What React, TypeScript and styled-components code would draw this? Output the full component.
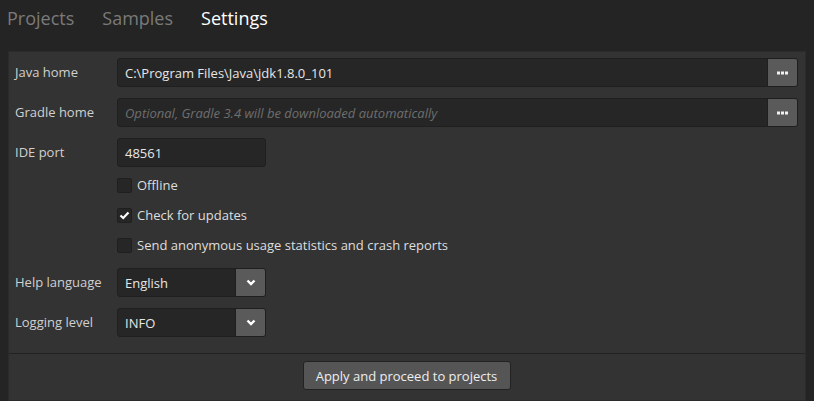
import * as React from "react";
import styled, { createGlobalStyle } from "styled-components";

const GlobalStyle = createGlobalStyle`
  html, body {
    margin: 0;
    padding: 0;
    background: #242424;
    font-family: "Open Sans", "Noto Sans", sans-serif;
  }
`;

const Page = styled.div`
  display: flex;
  flex-direction: column;
  width: 814px;
  height: 401px;
  overflow: hidden;
  background: #242424;
`;

const Tabs = styled.div`
  display: flex;
  gap: 28px;
  height: 36px;
  padding: 0 0 0 7px;
  align-items: center;
`;

const Tab = styled.div<{ $active?: boolean }>`
  font-size: 18px;
  color: ${(p) => (p.$active ? "#ffffff" : "#7a7a7a")};
`;

const Panel = styled.div`
  margin: 15px 0 0 8px;
  width: 798px;
  background: #333333;
  border: 1px solid #2b2b2b;
  box-sizing: border-box;
  flex: 1;
  display: flex;
  flex-direction: column;
`;

const Form = styled.div`
  display: flex;
  flex-direction: column;
  padding: 6px 7px 16px 6px;
  border-bottom: 1px solid #222222;
`;

const Row = styled.div<{ $gap?: number }>`
  display: flex;
  align-items: center;
  height: 29px;
  margin-top: ${(p) => p.$gap ?? 0}px;
`;

const Label = styled.div`
  width: 102px;
  flex: none;
  font-size: 13px;
  color: #d0d0d0;
  padding-bottom: 2px;
`;

const InputGroup = styled.div<{ $width?: number }>`
  display: flex;
  height: 29px;
  box-sizing: border-box;
  ${(p) => (p.$width ? `width: ${p.$width}px;` : "flex: 1;")}
  border: 1px solid #1f1f1f;
  border-radius: 3px;
  background: #262626;
  overflow: hidden;
`;

const Field = styled.div<{ $placeholder?: boolean }>`
  flex: 1;
  display: flex;
  align-items: center;
  padding: 0 7px;
  font-size: 13px;
  color: ${(p) => (p.$placeholder ? "#6e6e6e" : "#e6e6e6")};
  font-style: ${(p) => (p.$placeholder ? "italic" : "normal")};
`;

const SideButton = styled.div`
  width: 29px;
  flex: none;
  display: flex;
  align-items: center;
  justify-content: center;
  background: #5a5a5a;
  border-left: 1px solid #1f1f1f;
`;

const Checks = styled.div`
  display: flex;
  flex-direction: column;
  padding: 3px 0 0 102px;
`;

const CheckRow = styled.div`
  display: flex;
  align-items: center;
  height: 30px;
`;

const Box = styled.div`
  width: 15px;
  height: 15px;
  box-sizing: border-box;
  border: 1px solid #1f1f1f;
  border-radius: 2px;
  background: #262626;
  display: flex;
  align-items: center;
  justify-content: center;
  margin-right: 5px;
`;

const CheckText = styled.div`
  font-size: 13px;
  color: #dedede;
  padding-bottom: 1px;
`;

const Footer = styled.div`
  display: flex;
  justify-content: center;
  padding: 7px 0;
`;

const Button = styled.div`
  width: 208px;
  height: 29px;
  box-sizing: border-box;
  display: flex;
  align-items: center;
  justify-content: center;
  background: #555555;
  border: 1px solid #222222;
  border-radius: 3px;
  font-size: 13px;
  color: #eeeeee;
  margin-left: -1px;
`;

const Dots = () => (
  <svg width="11" height="4" viewBox="0 0 11 4">
    <rect x="0" y="0.5" width="3" height="3" fill="#f2f2f2" />
    <rect x="4" y="0.5" width="3" height="3" fill="#f2f2f2" />
    <rect x="8" y="0.5" width="3" height="3" fill="#f2f2f2" />
  </svg>
);

const Chevron = () => (
  <svg width="10" height="7" viewBox="0 0 10 7">
    <path d="M1.5 1.5 L5 5 L8.5 1.5" stroke="#ffffff" strokeWidth="2.4" fill="none" />
  </svg>
);

const Tick = () => (
  <svg width="11" height="9" viewBox="0 0 11 9">
    <path d="M1.5 4.5 L4.2 7 L9.5 1.5" stroke="#ffffff" strokeWidth="2.2" fill="none" />
  </svg>
);

const Check: React.FC<{ checked?: boolean; label: string }> = ({ checked, label }) => (
  <CheckRow>
    <Box>{checked && <Tick />}</Box>
    <CheckText>{label}</CheckText>
  </CheckRow>
);

const App: React.FC = () => (
  <>
    <GlobalStyle />
    <Page>
      <Tabs>
        <Tab>Projects</Tab>
        <Tab>Samples</Tab>
        <Tab $active>Settings</Tab>
      </Tabs>
      <Panel>
        <Form>
          <Row>
            <Label>Java home</Label>
            <InputGroup>
              <Field>C:\Program Files\Java\jdk1.8.0_101</Field>
              <SideButton>
                <Dots />
              </SideButton>
            </InputGroup>
          </Row>
          <Row $gap={11}>
            <Label>Gradle home</Label>
            <InputGroup>
              <Field $placeholder>Optional, Gradle 3.4 will be downloaded automatically</Field>
              <SideButton>
                <Dots />
              </SideButton>
            </InputGroup>
          </Row>
          <Row $gap={11}>
            <Label>IDE port</Label>
            <InputGroup $width={149}>
              <Field>48561</Field>
            </InputGroup>
          </Row>
          <Checks>
            <Check label="Offline" />
            <Check checked label="Check for updates" />
            <Check label="Send anonymous usage statistics and crash reports" />
          </Checks>
          <Row $gap={8}>
            <Label>Help language</Label>
            <InputGroup $width={149}>
              <Field>English</Field>
              <SideButton>
                <Chevron />
              </SideButton>
            </InputGroup>
          </Row>
          <Row $gap={11}>
            <Label>Logging level</Label>
            <InputGroup $width={149}>
              <Field>INFO</Field>
              <SideButton>
                <Chevron />
              </SideButton>
            </InputGroup>
          </Row>
        </Form>
        <Footer>
          <Button>Apply and proceed to projects</Button>
        </Footer>
      </Panel>
    </Page>
  </>
);

export default App;
